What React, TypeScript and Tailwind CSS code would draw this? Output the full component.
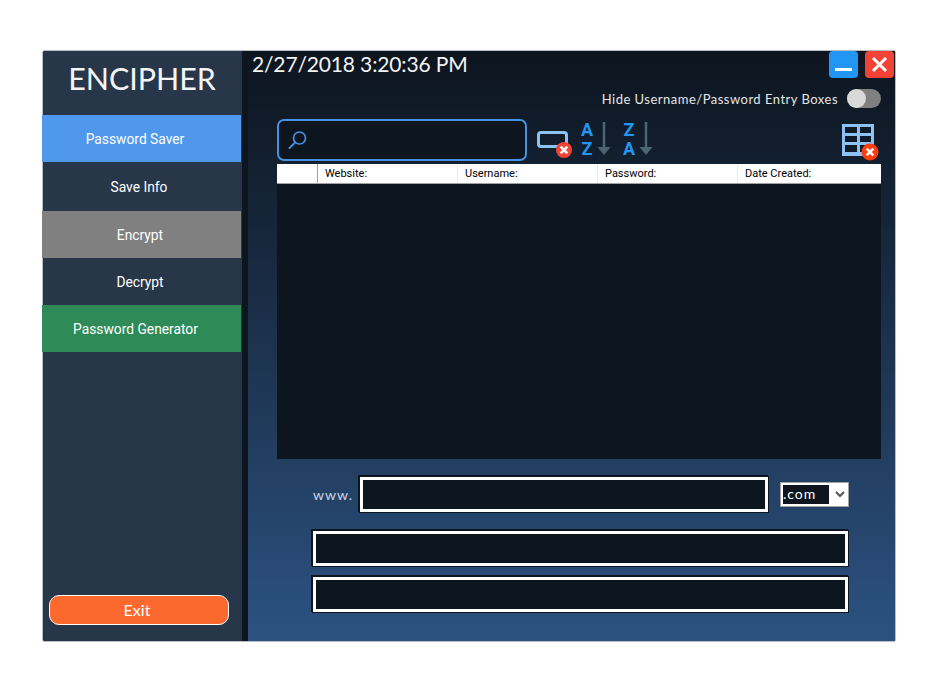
const uiFont = "font-['Lato','Liberation_Sans',sans-serif]";

function SearchIcon() {
  return (
    <svg width="20" height="20" viewBox="0 0 20 20" className="shrink-0">
      <circle cx="11.5" cy="8" r="6" fill="none" stroke="#4a90e2" strokeWidth="1.7" />
      <path d="M7.3 12.4 1.5 18" fill="none" stroke="#4a90e2" strokeWidth="2" strokeLinecap="round" />
    </svg>
  );
}

function ClearIcon() {
  return (
    <svg width="36" height="32" viewBox="0 0 36 32" className="mt-[9px] shrink-0">
      <rect x="2.5" y="4.5" width="28" height="14" rx="2.5" fill="none" stroke="#8cc3f4" strokeWidth="3" />
      <circle cx="28" cy="22" r="8" fill="#f44336" />
      <path d="M24.7 18.7 31.3 25.3M31.3 18.7 24.7 25.3" stroke="#fff" strokeWidth="2.6" />
    </svg>
  );
}

function SortArrow() {
  return (
    <svg width="14" height="34" viewBox="0 0 14 34" className="shrink-0">
      <path d="M7 0V27" stroke="#4d6570" strokeWidth="2.5" />
      <path d="M0.5 25H13.5L7 33Z" fill="#4d6570" />
    </svg>
  );
}

function SortButton({ top, bottom }: { top: string; bottom: string }) {
  return (
    <div className="flex items-start gap-[4px] pt-[3px]">
      <div className="-mt-[2px] flex w-[12px] flex-col items-center font-['Roboto',sans-serif] text-[18px] leading-[19px] font-bold text-[#2196f3]">
        <span>{top}</span>
        <span>{bottom}</span>
      </div>
      <SortArrow />
    </div>
  );
}

function GridIcon() {
  return (
    <svg width="40" height="38" viewBox="0 0 40 38" className="mt-[4px] ml-auto shrink-0">
      <rect x="1" y="1" width="32" height="32" fill="#8cc3f4" />
      <rect x="4" y="4" width="12" height="6" fill="#0f1b29" />
      <rect x="19" y="4" width="11" height="6" fill="#0f1b29" />
      <rect x="4" y="13" width="12" height="6" fill="#0f1b29" />
      <rect x="19" y="13" width="11" height="6" fill="#0f1b29" />
      <rect x="4" y="22" width="12" height="7" fill="#0f1b29" />
      <rect x="19" y="22" width="11" height="7" fill="#0f1b29" />
      <circle cx="29" cy="29" r="8.5" fill="#ff3d0a" />
      <path d="M25.7 25.7 32.3 32.3M32.3 25.7 25.7 32.3" stroke="#fff" strokeWidth="2.6" />
    </svg>
  );
}

function Field({ className }: { className: string }) {
  return (
    <input
      type="text"
      className={`block h-[35px] border-[3px] border-white bg-[#0d151f] shadow-[0_0_0_1px_#0d151f,-1px_-1px_0_1px_#0d151f] outline-none ${className}`}
    />
  );
}

export default function App() {
  return (
    <div className="min-h-[686px] bg-white pt-[50px] pl-[42px]">
      <div className="flex h-[592px] w-[854px] rounded-[3px] border border-[#b9bdc2] bg-[#0d151f]">
        {/* Sidebar */}
        <aside className="flex w-[199px] shrink-0 flex-col rounded-l-[2px] bg-[#283649]">
          <div className={`flex h-[64px] items-center justify-center pr-[1px] pb-[9px] text-[30.4px] text-[#f4f4f4] ${uiFont}`}>
            ENCIPHER
          </div>
          <nav className="-ml-px w-[199px] font-['Roboto',sans-serif] text-[13.8px] text-white">
            <div className="flex h-[47px] items-center justify-center bg-[#4f98ec] pt-[2px] pr-[13px]">Password Saver</div>
            <div className="flex h-[49px] items-center justify-center pt-[2px] pr-[5px]">Save Info</div>
            <div className="flex h-[47px] items-center justify-center bg-[#808080] pt-[2px] pr-[3px]">Encrypt</div>
            <div className="flex h-[47px] items-center justify-center pt-[2px] pr-[3px]">Decrypt</div>
            <div className="flex h-[47px] items-center justify-center bg-[#2e8b57] pt-[2px] pr-[12px]">Password Generator</div>
          </nav>
          <button className={`mt-auto mb-[16px] ml-[6px] h-[30px] w-[180px] rounded-[10px] border border-white bg-[#fb692e] pr-[4px] text-[16px] text-white ${uiFont}`}>
            Exit
          </button>
        </aside>

        {/* Main panel */}
        <main className="ml-[6px] flex flex-1 flex-col bg-gradient-to-b from-[#0d151f] to-[#2c5282]">
          <div className="flex h-[27px] items-start justify-between pr-px pl-[4px]">
            <span className={`-mt-px text-[21px] leading-[27px] tracking-[-0.15px] text-[#f4f4f4] ${uiFont}`}>2/27/2018 3:20:36 PM</span>
            <div className="flex gap-[7px]">
              <button className="flex h-[27px] w-[29px] items-end justify-center rounded-[4px] bg-[#2196f3] pb-[7px]">
                <span className="block h-[3px] w-[17px] bg-white" />
              </button>
              <button className="flex h-[27px] w-[29px] items-center justify-center rounded-[4px] bg-[#f44336]">
                <svg width="17" height="17" viewBox="0 0 17 17">
                  <path d="M2 2 15 15M15 2 2 15" stroke="#fff" strokeWidth="3" />
                </svg>
              </button>
            </div>
          </div>

          <div className="mt-[11px] flex h-[19px] items-center justify-end gap-[9px] pr-[14px]">
            <span className={`pt-[3px] text-[13px] tracking-[0.49px] text-[#e4e4e4] ${uiFont}`}>Hide Username/Password Entry Boxes</span>
            <div className="h-[19px] w-[34px] rounded-full bg-[#808080]">
              <div className="h-[19px] w-[19px] rounded-full bg-[#d9d9d9]" />
            </div>
          </div>

          {/* Toolbar */}
          <div className="mt-[11px] flex h-[42px] pr-[14px] pl-[29px]">
            <div className="flex h-[42px] w-[250px] items-center rounded-[7px] border-2 border-[#4a90e2] bg-[#0d151f] pl-[9px]">
              <SearchIcon />
            </div>
            <div className="ml-[9px]">
              <ClearIcon />
            </div>
            <div className="ml-[9px]">
              <SortButton top="A" bottom="Z" />
            </div>
            <div className="ml-[12px]">
              <SortButton top="Z" bottom="A" />
            </div>
            <GridIcon />
          </div>

          {/* Table */}
          <div className="mt-[3px] mr-[14px] ml-[29px] h-[295px] bg-[#0d151f]">
            <div className="flex h-[20px] items-center border-b border-[#a0a0a0] bg-white font-['Roboto',sans-serif] text-[11px] text-black">
              <div className="h-full w-[41px] border-r border-[#a0a0a0]" />
              <div className="flex h-full w-[140px] items-center border-r border-[#e3ecf5] pt-px pl-[7px]">Website:</div>
              <div className="flex h-full w-[140px] items-center border-r border-[#e3ecf5] pt-px pl-[7px]">Username:</div>
              <div className="flex h-full w-[140px] items-center border-r border-[#e3ecf5] pt-px pl-[7px]">Password:</div>
              <div className="flex h-full flex-1 items-center pt-px pl-[7px]">Date Created:</div>
            </div>
          </div>

          {/* Entry boxes */}
          <div className="mt-[18px] flex items-center pl-[65px]">
            <span className={`w-[47px] text-[14px] tracking-[1px] text-[#c8d4e2] ${uiFont}`}>www.</span>
            <Field className="w-[408px]" />
            <div className="ml-[12px] flex h-[25px] w-[69px] items-center border border-[#a0a0a0] bg-white p-[2px]">
              <div className={`flex h-full w-[46px] items-center bg-[#0d151f] pb-[2px] text-[14px] tracking-[1px] text-white ${uiFont}`}>.com</div>
              <svg width="10" height="7" viewBox="0 0 10 7" className="ml-[6px]">
                <path d="M1 1 5 5 9 1" fill="none" stroke="#555" strokeWidth="2" />
              </svg>
            </div>
          </div>
          <Field className="mt-[19px] ml-[65px] w-[535px]" />
          <Field className="mt-[11px] ml-[65px] w-[535px]" />
        </main>
      </div>
    </div>
  );
}
